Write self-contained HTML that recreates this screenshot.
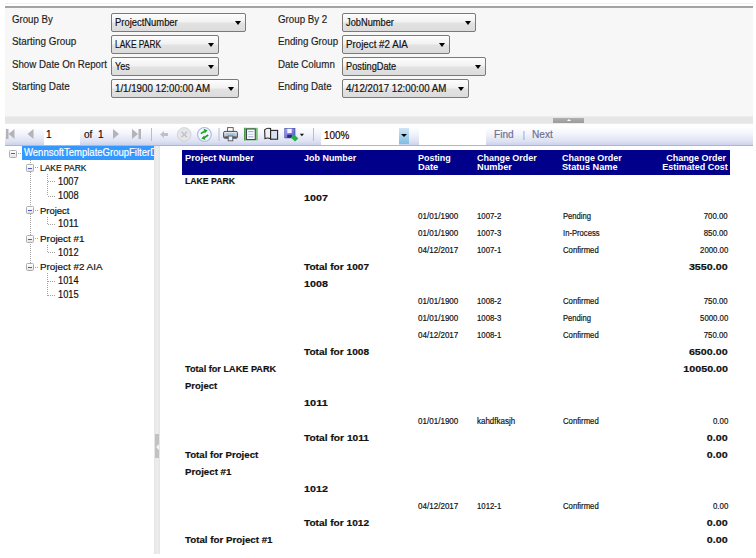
<!DOCTYPE html>
<html><head><meta charset="utf-8"><style>
html,body{margin:0;padding:0;width:756px;height:558px;overflow:hidden;background:#fff;}
body{position:relative;font-family:"Liberation Sans",sans-serif;}
.t{position:absolute;white-space:pre;font-family:"Liberation Sans",sans-serif;-webkit-text-stroke:0.18px currentColor;}
.sel{position:absolute;border:1px solid #7a7a7a;border-radius:2px;background:linear-gradient(#fdfdfd,#f2f2f2 45%,#e2e2e2 55%,#dcdcdc);}
.arr{position:absolute;width:0;height:0;border-left:3.8px solid transparent;border-right:3.8px solid transparent;border-top:4px solid #000;}
.tb{position:absolute;width:6px;height:6px;border:1px solid #adadad;border-radius:1.5px;background:linear-gradient(#fff,#e4e4e4);}
.tb::after{content:"";position:absolute;left:1px;top:2.5px;width:4px;height:1px;background:#4a5cc0;}
</style></head><body>
<div style="position:absolute;left:5px;top:6px;width:748px;height:2px;background:#a3a3a3"></div>
<div style="position:absolute;left:5px;top:8px;width:748px;height:109px;background:#f7f7f7"></div>
<div class="t" style="left:12px;transform-origin:0 50%;top:14.09px;font-size:11px;line-height:11px;font-weight:400;color:#1e1e1e;transform:scaleX(0.8763);">Group By</div>
<div class="t" style="left:12px;transform-origin:0 50%;top:36.39px;font-size:11px;line-height:11px;font-weight:400;color:#1e1e1e;transform:scaleX(0.8968);">Starting Group</div>
<div class="t" style="left:12px;transform-origin:0 50%;top:58.59px;font-size:11px;line-height:11px;font-weight:400;color:#1e1e1e;transform:scaleX(0.8823);">Show Date On Report</div>
<div class="t" style="left:12px;transform-origin:0 50%;top:80.79px;font-size:11px;line-height:11px;font-weight:400;color:#1e1e1e;transform:scaleX(0.8995);">Starting Date</div>
<div class="t" style="left:278px;transform-origin:0 50%;top:14.09px;font-size:11px;line-height:11px;font-weight:400;color:#1e1e1e;transform:scaleX(0.8848);">Group By 2</div>
<div class="t" style="left:278px;transform-origin:0 50%;top:36.39px;font-size:11px;line-height:11px;font-weight:400;color:#1e1e1e;transform:scaleX(0.8845);">Ending Group</div>
<div class="t" style="left:278px;transform-origin:0 50%;top:58.59px;font-size:11px;line-height:11px;font-weight:400;color:#1e1e1e;transform:scaleX(0.8847);">Date Column</div>
<div class="t" style="left:278px;transform-origin:0 50%;top:80.79px;font-size:11px;line-height:11px;font-weight:400;color:#1e1e1e;transform:scaleX(0.8859);">Ending Date</div>
<div class="sel" style="left:111px;top:13px;width:133px;height:17px;"></div>
<div class="t" style="left:114.6px;transform-origin:0 50%;top:18.47px;font-size:10.2px;line-height:10.2px;font-weight:400;color:#111;transform:scaleX(0.9234);">ProjectNumber</div>
<div class="arr" style="left:235.2px;top:20.5px;"></div>
<div class="sel" style="left:111px;top:35px;width:106px;height:17px;"></div>
<div class="t" style="left:114.6px;transform-origin:0 50%;top:40.47px;font-size:10.2px;line-height:10.2px;font-weight:400;color:#111;transform:scaleX(0.8246);">LAKE PARK</div>
<div class="arr" style="left:208.2px;top:42.5px;"></div>
<div class="sel" style="left:111px;top:57px;width:106px;height:17px;"></div>
<div class="t" style="left:114.6px;transform-origin:0 50%;top:62.47px;font-size:10.2px;line-height:10.2px;font-weight:400;color:#111;transform:scaleX(0.8901);">Yes</div>
<div class="arr" style="left:208.2px;top:64.5px;"></div>
<div class="sel" style="left:111px;top:79px;width:126px;height:17px;"></div>
<div class="t" style="left:114.6px;transform-origin:0 50%;top:84.47px;font-size:10.2px;line-height:10.2px;font-weight:400;color:#111;transform:scaleX(0.9537);">1/1/1900 12:00:00 AM</div>
<div class="arr" style="left:228.2px;top:86.5px;"></div>
<div class="sel" style="left:342px;top:13px;width:132px;height:17px;"></div>
<div class="t" style="left:345.6px;transform-origin:0 50%;top:18.47px;font-size:10.2px;line-height:10.2px;font-weight:400;color:#111;transform:scaleX(0.9094);">JobNumber</div>
<div class="arr" style="left:465.2px;top:20.5px;"></div>
<div class="sel" style="left:342px;top:35px;width:106px;height:17px;"></div>
<div class="t" style="left:345.6px;transform-origin:0 50%;top:40.47px;font-size:10.2px;line-height:10.2px;font-weight:400;color:#111;transform:scaleX(0.9585);">Project #2 AIA</div>
<div class="arr" style="left:439.2px;top:42.5px;"></div>
<div class="sel" style="left:342px;top:57px;width:142px;height:17px;"></div>
<div class="t" style="left:345.6px;transform-origin:0 50%;top:62.47px;font-size:10.2px;line-height:10.2px;font-weight:400;color:#111;transform:scaleX(0.9053);">PostingDate</div>
<div class="arr" style="left:475.2px;top:64.5px;"></div>
<div class="sel" style="left:342px;top:79px;width:125px;height:17px;"></div>
<div class="t" style="left:345.6px;transform-origin:0 50%;top:84.47px;font-size:10.2px;line-height:10.2px;font-weight:400;color:#111;transform:scaleX(0.9517);">4/12/2017 12:00:00 AM</div>
<div class="arr" style="left:458.2px;top:86.5px;"></div>
<div style="position:absolute;left:5px;top:3px;width:748px;height:1px;background:#f1f1f1"></div>
<div style="position:absolute;left:5px;top:116px;width:748px;height:8px;background:linear-gradient(#eeeeee 0 1px,#e6e6e6 1px 7px,#ebebeb 7px)"></div>
<div style="position:absolute;left:553px;top:117.5px;width:31px;height:5.2px;background:linear-gradient(#b0b0b0,#9a9a9a)"></div>
<div style="position:absolute;left:566.5px;top:118.6px;width:0;height:0;border-left:2.5px solid transparent;border-right:2.5px solid transparent;border-bottom:2.5px solid #fff"></div>
<div style="position:absolute;left:5px;top:124px;width:748px;height:3px;background:#fff"></div>
<div style="position:absolute;left:5px;top:127px;width:748px;height:18px;background:linear-gradient(#ffffff,#f3f5fd 35%,#dde1f1 80%,#cdd2ee)"></div>
<div style="position:absolute;left:5px;top:145px;width:748px;height:1px;background:#b0b7c2"></div>
<div style="position:absolute;left:44px;top:127px;width:36px;height:18px;background:#fff"></div>
<div style="position:absolute;left:321px;top:127px;width:78px;height:18px;background:#fff"></div>
<div style="position:absolute;left:399px;top:128px;width:10px;height:16px;background:linear-gradient(#cfe6f5,#7fbde4)"></div>
<div style="position:absolute;left:401px;top:134px;width:0;height:0;border-left:3px solid transparent;border-right:3px solid transparent;border-top:3px solid #000"></div>
<div style="position:absolute;left:419px;top:127px;width:67px;height:18px;background:#fff"></div>
<div class="t" style="left:46px;transform-origin:0 50%;top:128.83px;font-size:10.6px;line-height:10.6px;font-weight:400;color:#200;transform:scaleX(0.9500);">1</div>
<div class="t" style="left:83.5px;transform-origin:0 50%;top:128.83px;font-size:10.6px;line-height:10.6px;font-weight:400;color:#111;transform:scaleX(0.9500);">of</div>
<div class="t" style="left:98px;transform-origin:0 50%;top:128.83px;font-size:10.6px;line-height:10.6px;font-weight:400;color:#200;transform:scaleX(0.9500);">1</div>
<div class="t" style="left:323.8px;transform-origin:0 50%;top:130.14px;font-size:10.7px;line-height:10.7px;font-weight:400;color:#200;transform:scaleX(0.9300);">100%</div>
<div class="t" style="left:494.3px;transform-origin:0 50%;top:129.68px;font-size:10.3px;line-height:10.3px;font-weight:400;color:#6f6f8f;transform:scaleX(0.9800);">Find</div>
<div class="t" style="left:522.8px;transform-origin:0 50%;top:131.09px;font-size:8.4px;line-height:8.4px;font-weight:400;color:#a6a6bc;">|</div>
<div class="t" style="left:532.4px;transform-origin:0 50%;top:129.68px;font-size:10.3px;line-height:10.3px;font-weight:400;color:#6f6f8f;transform:scaleX(0.9800);">Next</div>

<svg style="position:absolute;left:0;top:120px" width="320" height="26" viewBox="0 120 320 26">
 <!-- first -->
 <rect x="6" y="129" width="2.5" height="10" fill="#b4b4b8"/>
 <path d="M14.5 129 L8.5 134 L14.5 139 Z" fill="#b4b4b8"/>
 <!-- prev -->
 <path d="M33.5 129 L27.5 134 L33.5 139 Z" fill="#b4b4b8"/>
 <!-- next -->
 <path d="M113 129 L119 134 L113 139 Z" fill="#b4b4b8"/>
 <!-- last -->
 <path d="M132 129 L138 134 L132 139 Z" fill="#b4b4b8"/>
 <rect x="138.5" y="129" width="2.5" height="10" fill="#b4b4b8"/>
 <!-- separators -->
 <rect x="151" y="128" width="1" height="13" fill="#b8bccc"/>
 <rect x="218.5" y="128" width="1" height="13" fill="#b8bccc"/>
 <rect x="313" y="128" width="1" height="13" fill="#b8bccc"/>
 <!-- back -->
 <path d="M160 134.5 L164 131 L164 133 L168 133 L168 136 L164 136 L164 138 Z" fill="#c0c0c4"/>
 <!-- stop -->
 <circle cx="184.2" cy="134.5" r="6.8" fill="#e6e6ea" stroke="#d0d0d6" stroke-width="1"/>
 <path d="M181.5 131.8 L187 137.2 M187 131.8 L181.5 137.2" stroke="#c2c2c8" stroke-width="1.6"/>
 <!-- refresh -->
 <defs>
  <linearGradient id="gBody" x1="0" y1="0" x2="0" y2="1"><stop offset="0" stop-color="#eceef2"/><stop offset="1" stop-color="#a4a8b0"/></linearGradient>
  <linearGradient id="gSave" x1="0" y1="0" x2="1" y2="1"><stop offset="0" stop-color="#a4aaf8"/><stop offset="1" stop-color="#5058d0"/></linearGradient>
 </defs>
 <circle cx="204.4" cy="134.4" r="6.9" fill="#f2f7ff" stroke="#a6bbe0" stroke-width="1.1"/>
 <path d="M200.8 133.6 L204.6 131.2" stroke="#22a622" stroke-width="1.7" fill="none"/>
 <path d="M203.6 128.8 L207.6 130.2 L204.8 133.4 Z" fill="#22a622"/>
 <path d="M208.2 135.0 L204.4 137.6" stroke="#1e9a1e" stroke-width="1.7" fill="none"/>
 <path d="M205.4 140.0 L201.4 138.4 L204.2 135.4 Z" fill="#1e9a1e"/>
 <!-- printer -->
 <rect x="227.6" y="127.6" width="5.6" height="4.4" fill="#fafafa" stroke="#555" stroke-width="0.9"/>
 <rect x="223.6" y="131.4" width="13.8" height="6.8" rx="1.3" fill="url(#gBody)" stroke="#3c3c3c" stroke-width="0.9"/>
 <rect x="224.4" y="136.4" width="12.2" height="1.6" fill="#555"/>
 <rect x="226.2" y="133.4" width="8.6" height="1.6" fill="#9cc0e4"/>
 <rect x="228.2" y="136.0" width="4.6" height="4.8" fill="#e4f2fc" stroke="#555" stroke-width="0.9"/>
 <!-- page layout -->
 <rect x="244" y="127.8" width="13.8" height="12.6" fill="#7cc47c"/>
 <rect x="244" y="127.8" width="1.4" height="12.6" fill="#4a9a4a"/>
 <rect x="246.6" y="129.0" width="8.6" height="10.6" fill="#fafbfd" stroke="#2a3040" stroke-width="0.9"/>
 <rect x="248.2" y="131.2" width="5.2" height="0.9" fill="#8c9ccc"/>
 <rect x="248.2" y="133.8" width="5.2" height="0.9" fill="#b8c4e0"/>
 <rect x="248.2" y="136.4" width="5.2" height="0.9" fill="#8c9ccc"/>
 <!-- page setup (book) -->
 <path d="M264.6 129.8 Q267.2 127.4 270.6 128.6 L270.8 138.8 Q267.6 137.2 265 138.6 Z" fill="#eef1f6" stroke="#262626" stroke-width="1.1"/>
 <rect x="270.6" y="130.4" width="7" height="8.8" fill="#d6e2f4" stroke="#262626" stroke-width="1.1"/>
 <!-- save -->
 <rect x="284.8" y="128.3" width="10.2" height="9.6" fill="url(#gSave)" stroke="#3a3a98" stroke-width="0.6"/>
 <rect x="287.3" y="128.8" width="4.4" height="4.2" fill="#f2f4fc"/>
 <rect x="287.2" y="134.8" width="4.6" height="3" fill="#26287a"/>
 <path d="M290.8 137.6 L294.2 134.6 L298.4 138.4 L295 141.6 Z" fill="#24b048"/>
 <path d="M299.8 133.8 L304 133.8 L301.9 136.2 Z" fill="#111"/>
</svg>
<div style="position:absolute;left:5px;top:146px;width:149px;height:412px;background:#fff"></div>
<div style="position:absolute;left:154px;top:146px;width:6px;height:408px;background:linear-gradient(90deg,#e4e4e4,#eeeeee 50%,#e4e4e4)"></div>
<div style="position:absolute;left:154.7px;top:434px;width:4.8px;height:23.5px;background:#c2c2c2"></div>
<div style="position:absolute;left:155.5px;top:444px;width:0;height:0;border-top:3px solid transparent;border-bottom:3px solid transparent;border-right:3px solid #f4f4f4"></div>
<div style="position:absolute;left:22px;top:146px;width:132px;height:14px;background:#3399ff"></div>
<div style="position:absolute;left:22px;top:146px;width:132px;height:14px;overflow:hidden"><div class="t" style="left:1.7px;top:2.47px;font-size:10.2px;line-height:10.2px;color:#fff;transform-origin:0 50%;transform:scaleX(0.9336)">WennsoftTemplateGroupFilterDocument</div></div>
<div class="tb" style="left:9px;top:149.5px"></div>
<div style="position:absolute;left:18px;top:153px;width:4px;height:1px;background:repeating-linear-gradient(90deg,#a4a4a4 0 1px,transparent 1px 2px)"></div>
<div style="position:absolute;left:30px;top:160px;width:1px;height:107px;background:repeating-linear-gradient(#a4a4a4 0 1px,transparent 1px 2px)"></div>
<div class="tb" style="left:26px;top:164px"></div>
<div style="position:absolute;left:35px;top:167px;width:4px;height:1px;background:repeating-linear-gradient(90deg,#a4a4a4 0 1px,transparent 1px 2px)"></div>
<div class="t" style="left:40px;transform-origin:0 50%;top:162.94px;font-size:9.4px;line-height:9.4px;font-weight:400;color:#111;transform:scaleX(0.9043);">LAKE PARK</div>
<div class="tb" style="left:26px;top:206px"></div>
<div style="position:absolute;left:35px;top:210px;width:4px;height:1px;background:repeating-linear-gradient(90deg,#a4a4a4 0 1px,transparent 1px 2px)"></div>
<div class="t" style="left:40px;transform-origin:0 50%;top:205.54px;font-size:9.4px;line-height:9.4px;font-weight:400;color:#111;transform:scaleX(1.0097);">Project</div>
<div class="tb" style="left:26px;top:235px"></div>
<div style="position:absolute;left:35px;top:238px;width:4px;height:1px;background:repeating-linear-gradient(90deg,#a4a4a4 0 1px,transparent 1px 2px)"></div>
<div class="t" style="left:40px;transform-origin:0 50%;top:233.94px;font-size:9.4px;line-height:9.4px;font-weight:400;color:#111;transform:scaleX(1.0559);">Project #1</div>
<div class="tb" style="left:26px;top:263px"></div>
<div style="position:absolute;left:35px;top:267px;width:4px;height:1px;background:repeating-linear-gradient(90deg,#a4a4a4 0 1px,transparent 1px 2px)"></div>
<div class="t" style="left:40px;transform-origin:0 50%;top:262.34px;font-size:9.4px;line-height:9.4px;font-weight:400;color:#111;transform:scaleX(1.0512);">Project #2 AIA</div>
<div style="position:absolute;left:48px;top:181px;width:8px;height:1px;background:repeating-linear-gradient(90deg,#a4a4a4 0 1px,transparent 1px 2px)"></div>
<div class="t" style="left:58px;transform-origin:0 50%;top:176.74px;font-size:10px;line-height:10px;font-weight:400;color:#111;transform:scaleX(0.9247);">1007</div>
<div style="position:absolute;left:48px;top:196px;width:8px;height:1px;background:repeating-linear-gradient(90deg,#a4a4a4 0 1px,transparent 1px 2px)"></div>
<div class="t" style="left:58px;transform-origin:0 50%;top:190.94px;font-size:10px;line-height:10px;font-weight:400;color:#111;transform:scaleX(0.9247);">1008</div>
<div style="position:absolute;left:48px;top:224px;width:8px;height:1px;background:repeating-linear-gradient(90deg,#a4a4a4 0 1px,transparent 1px 2px)"></div>
<div class="t" style="left:58px;transform-origin:0 50%;top:219.34px;font-size:10px;line-height:10px;font-weight:400;color:#111;transform:scaleX(0.9567);">1011</div>
<div style="position:absolute;left:48px;top:252px;width:8px;height:1px;background:repeating-linear-gradient(90deg,#a4a4a4 0 1px,transparent 1px 2px)"></div>
<div class="t" style="left:58px;transform-origin:0 50%;top:247.74px;font-size:10px;line-height:10px;font-weight:400;color:#111;transform:scaleX(0.9247);">1012</div>
<div style="position:absolute;left:48px;top:281px;width:8px;height:1px;background:repeating-linear-gradient(90deg,#a4a4a4 0 1px,transparent 1px 2px)"></div>
<div class="t" style="left:58px;transform-origin:0 50%;top:276.14px;font-size:10px;line-height:10px;font-weight:400;color:#111;transform:scaleX(0.9247);">1014</div>
<div style="position:absolute;left:48px;top:295px;width:8px;height:1px;background:repeating-linear-gradient(90deg,#a4a4a4 0 1px,transparent 1px 2px)"></div>
<div class="t" style="left:58px;transform-origin:0 50%;top:290.34px;font-size:10px;line-height:10px;font-weight:400;color:#111;transform:scaleX(0.9247);">1015</div>
<div style="position:absolute;left:47px;top:174px;width:1px;height:22px;background:repeating-linear-gradient(#a4a4a4 0 1px,transparent 1px 2px)"></div>
<div style="position:absolute;left:47px;top:217px;width:1px;height:8px;background:repeating-linear-gradient(#a4a4a4 0 1px,transparent 1px 2px)"></div>
<div style="position:absolute;left:47px;top:245px;width:1px;height:8px;background:repeating-linear-gradient(#a4a4a4 0 1px,transparent 1px 2px)"></div>
<div style="position:absolute;left:47px;top:273px;width:1px;height:23px;background:repeating-linear-gradient(#a4a4a4 0 1px,transparent 1px 2px)"></div>
<div style="position:absolute;left:160px;top:146px;width:596px;height:412px;background:#fff"></div>
<div style="position:absolute;left:182px;top:150px;width:548px;height:24.5px;background:#00008b"></div>
<div class="t" style="left:185px;transform-origin:0 50%;top:152.87px;font-size:9.6px;line-height:9.6px;font-weight:700;color:#fff;transform:scaleX(0.9622);-webkit-text-stroke:0;">Project Number</div>
<div class="t" style="left:304px;transform-origin:0 50%;top:152.87px;font-size:9.6px;line-height:9.6px;font-weight:700;color:#fff;transform:scaleX(0.9343);-webkit-text-stroke:0;">Job Number</div>
<div class="t" style="left:418px;transform-origin:0 50%;top:152.87px;font-size:9.6px;line-height:9.6px;font-weight:700;color:#fff;transform:scaleX(0.9317);-webkit-text-stroke:0;">Posting</div>
<div class="t" style="left:418px;transform-origin:0 50%;top:162.47px;font-size:9.6px;line-height:9.6px;font-weight:700;color:#fff;transform:scaleX(0.9764);-webkit-text-stroke:0;">Date</div>
<div class="t" style="left:477px;transform-origin:0 50%;top:152.87px;font-size:9.6px;line-height:9.6px;font-weight:700;color:#fff;transform:scaleX(0.9345);-webkit-text-stroke:0;">Change Order</div>
<div class="t" style="left:477px;transform-origin:0 50%;top:162.47px;font-size:9.6px;line-height:9.6px;font-weight:700;color:#fff;transform:scaleX(0.9645);-webkit-text-stroke:0;">Number</div>
<div class="t" style="left:562px;transform-origin:0 50%;top:152.87px;font-size:9.6px;line-height:9.6px;font-weight:700;color:#fff;transform:scaleX(0.9345);-webkit-text-stroke:0;">Change Order</div>
<div class="t" style="left:562px;transform-origin:0 50%;top:162.47px;font-size:9.6px;line-height:9.6px;font-weight:700;color:#fff;transform:scaleX(0.9565);-webkit-text-stroke:0;">Status Name</div>
<div class="t" style="right:30px;transform-origin:100% 50%;top:152.87px;font-size:9.6px;line-height:9.6px;font-weight:700;color:#fff;transform:scaleX(0.9345);-webkit-text-stroke:0;">Change Order</div>
<div class="t" style="right:28px;transform-origin:100% 50%;top:162.47px;font-size:9.6px;line-height:9.6px;font-weight:700;color:#fff;transform:scaleX(0.9381);-webkit-text-stroke:0;">Estimated Cost</div>
<div class="t" style="left:185px;transform-origin:0 50%;top:176.37px;font-size:9.6px;line-height:9.6px;font-weight:700;color:#111;transform:scaleX(0.9047);">LAKE PARK</div>
<div class="t" style="left:304px;transform-origin:0 50%;top:193.45px;font-size:9.6px;line-height:9.6px;font-weight:700;color:#111;transform:scaleX(1.1181);">1007</div>
<div class="t" style="left:418px;transform-origin:0 50%;top:211.65px;font-size:8.4px;line-height:8.4px;font-weight:400;color:#111;transform:scaleX(0.9623);">01/01/1900</div>
<div class="t" style="left:477px;transform-origin:0 50%;top:211.65px;font-size:8.4px;line-height:8.4px;font-weight:400;color:#111;transform:scaleX(0.9310);">1007-2</div>
<div class="t" style="left:562.5px;transform-origin:0 50%;top:211.65px;font-size:8.4px;line-height:8.4px;font-weight:400;color:#111;transform:scaleX(0.9126);">Pending</div>
<div class="t" style="right:28px;transform-origin:100% 50%;top:211.65px;font-size:8.4px;line-height:8.4px;font-weight:400;color:#111;transform:scaleX(0.9342);">700.00</div>
<div class="t" style="left:418px;transform-origin:0 50%;top:228.73px;font-size:8.4px;line-height:8.4px;font-weight:400;color:#111;transform:scaleX(0.9623);">01/01/1900</div>
<div class="t" style="left:477px;transform-origin:0 50%;top:228.73px;font-size:8.4px;line-height:8.4px;font-weight:400;color:#111;transform:scaleX(0.9310);">1007-3</div>
<div class="t" style="left:562.5px;transform-origin:0 50%;top:228.73px;font-size:8.4px;line-height:8.4px;font-weight:400;color:#111;transform:scaleX(0.9133);">In-Process</div>
<div class="t" style="right:28px;transform-origin:100% 50%;top:228.73px;font-size:8.4px;line-height:8.4px;font-weight:400;color:#111;transform:scaleX(0.9342);">850.00</div>
<div class="t" style="left:418px;transform-origin:0 50%;top:245.81px;font-size:8.4px;line-height:8.4px;font-weight:400;color:#111;transform:scaleX(0.9623);">04/12/2017</div>
<div class="t" style="left:477px;transform-origin:0 50%;top:245.81px;font-size:8.4px;line-height:8.4px;font-weight:400;color:#111;transform:scaleX(0.9310);">1007-1</div>
<div class="t" style="left:562.5px;transform-origin:0 50%;top:245.81px;font-size:8.4px;line-height:8.4px;font-weight:400;color:#111;transform:scaleX(0.9243);">Confirmed</div>
<div class="t" style="right:28px;transform-origin:100% 50%;top:245.81px;font-size:8.4px;line-height:8.4px;font-weight:400;color:#111;transform:scaleX(0.9324);">2000.00</div>
<div class="t" style="left:304px;transform-origin:0 50%;top:261.77px;font-size:9.6px;line-height:9.6px;font-weight:700;color:#111;transform:scaleX(1.0543);">Total for 1007</div>
<div class="t" style="right:28px;transform-origin:100% 50%;top:261.77px;font-size:9.6px;line-height:9.6px;font-weight:700;color:#111;transform:scaleX(1.1186);">3550.00</div>
<div class="t" style="left:304px;transform-origin:0 50%;top:278.85px;font-size:9.6px;line-height:9.6px;font-weight:700;color:#111;transform:scaleX(1.1181);">1008</div>
<div class="t" style="left:418px;transform-origin:0 50%;top:297.05px;font-size:8.4px;line-height:8.4px;font-weight:400;color:#111;transform:scaleX(0.9623);">01/01/1900</div>
<div class="t" style="left:477px;transform-origin:0 50%;top:297.05px;font-size:8.4px;line-height:8.4px;font-weight:400;color:#111;transform:scaleX(0.9310);">1008-2</div>
<div class="t" style="left:562.5px;transform-origin:0 50%;top:297.05px;font-size:8.4px;line-height:8.4px;font-weight:400;color:#111;transform:scaleX(0.9243);">Confirmed</div>
<div class="t" style="right:28px;transform-origin:100% 50%;top:297.05px;font-size:8.4px;line-height:8.4px;font-weight:400;color:#111;transform:scaleX(0.9342);">750.00</div>
<div class="t" style="left:418px;transform-origin:0 50%;top:314.13px;font-size:8.4px;line-height:8.4px;font-weight:400;color:#111;transform:scaleX(0.9623);">01/01/1900</div>
<div class="t" style="left:477px;transform-origin:0 50%;top:314.13px;font-size:8.4px;line-height:8.4px;font-weight:400;color:#111;transform:scaleX(0.9310);">1008-3</div>
<div class="t" style="left:562.5px;transform-origin:0 50%;top:314.13px;font-size:8.4px;line-height:8.4px;font-weight:400;color:#111;transform:scaleX(0.9126);">Pending</div>
<div class="t" style="right:28px;transform-origin:100% 50%;top:314.13px;font-size:8.4px;line-height:8.4px;font-weight:400;color:#111;transform:scaleX(0.9324);">5000.00</div>
<div class="t" style="left:418px;transform-origin:0 50%;top:331.21px;font-size:8.4px;line-height:8.4px;font-weight:400;color:#111;transform:scaleX(0.9623);">04/12/2017</div>
<div class="t" style="left:477px;transform-origin:0 50%;top:331.21px;font-size:8.4px;line-height:8.4px;font-weight:400;color:#111;transform:scaleX(0.9310);">1008-1</div>
<div class="t" style="left:562.5px;transform-origin:0 50%;top:331.21px;font-size:8.4px;line-height:8.4px;font-weight:400;color:#111;transform:scaleX(0.9243);">Confirmed</div>
<div class="t" style="right:28px;transform-origin:100% 50%;top:331.21px;font-size:8.4px;line-height:8.4px;font-weight:400;color:#111;transform:scaleX(0.9342);">750.00</div>
<div class="t" style="left:304px;transform-origin:0 50%;top:347.17px;font-size:9.6px;line-height:9.6px;font-weight:700;color:#111;transform:scaleX(1.0543);">Total for 1008</div>
<div class="t" style="right:28px;transform-origin:100% 50%;top:347.17px;font-size:9.6px;line-height:9.6px;font-weight:700;color:#111;transform:scaleX(1.1186);">6500.00</div>
<div class="t" style="left:185px;transform-origin:0 50%;top:364.25px;font-size:9.6px;line-height:9.6px;font-weight:700;color:#111;transform:scaleX(0.9536);">Total for LAKE PARK</div>
<div class="t" style="right:28px;transform-origin:100% 50%;top:364.25px;font-size:9.6px;line-height:9.6px;font-weight:700;color:#111;transform:scaleX(1.1185);">10050.00</div>
<div class="t" style="left:185px;transform-origin:0 50%;top:381.33px;font-size:9.6px;line-height:9.6px;font-weight:700;color:#111;transform:scaleX(0.9853);">Project</div>
<div class="t" style="left:304px;transform-origin:0 50%;top:398.41px;font-size:9.6px;line-height:9.6px;font-weight:700;color:#111;transform:scaleX(1.1465);">1011</div>
<div class="t" style="left:418px;transform-origin:0 50%;top:416.61px;font-size:8.4px;line-height:8.4px;font-weight:400;color:#111;transform:scaleX(0.9623);">01/01/1900</div>
<div class="t" style="left:477px;transform-origin:0 50%;top:416.61px;font-size:8.4px;line-height:8.4px;font-weight:400;color:#111;transform:scaleX(0.9522);">kahdfkasjh</div>
<div class="t" style="left:562.5px;transform-origin:0 50%;top:416.61px;font-size:8.4px;line-height:8.4px;font-weight:400;color:#111;transform:scaleX(0.9243);">Confirmed</div>
<div class="t" style="right:28px;transform-origin:100% 50%;top:416.61px;font-size:8.4px;line-height:8.4px;font-weight:400;color:#111;transform:scaleX(0.9410);">0.00</div>
<div class="t" style="left:304px;transform-origin:0 50%;top:432.57px;font-size:9.6px;line-height:9.6px;font-weight:700;color:#111;transform:scaleX(1.0634);">Total for 1011</div>
<div class="t" style="right:28px;transform-origin:100% 50%;top:432.57px;font-size:9.6px;line-height:9.6px;font-weight:700;color:#111;transform:scaleX(1.1190);">0.00</div>
<div class="t" style="left:185px;transform-origin:0 50%;top:449.65px;font-size:9.6px;line-height:9.6px;font-weight:700;color:#111;transform:scaleX(1.0048);">Total for Project</div>
<div class="t" style="right:28px;transform-origin:100% 50%;top:449.65px;font-size:9.6px;line-height:9.6px;font-weight:700;color:#111;transform:scaleX(1.1190);">0.00</div>
<div class="t" style="left:185px;transform-origin:0 50%;top:466.73px;font-size:9.6px;line-height:9.6px;font-weight:700;color:#111;transform:scaleX(1.0108);">Project #1</div>
<div class="t" style="left:304px;transform-origin:0 50%;top:483.81px;font-size:9.6px;line-height:9.6px;font-weight:700;color:#111;transform:scaleX(1.1181);">1012</div>
<div class="t" style="left:418px;transform-origin:0 50%;top:502.01px;font-size:8.4px;line-height:8.4px;font-weight:400;color:#111;transform:scaleX(0.9623);">04/12/2017</div>
<div class="t" style="left:477px;transform-origin:0 50%;top:502.01px;font-size:8.4px;line-height:8.4px;font-weight:400;color:#111;transform:scaleX(0.9310);">1012-1</div>
<div class="t" style="left:562.5px;transform-origin:0 50%;top:502.01px;font-size:8.4px;line-height:8.4px;font-weight:400;color:#111;transform:scaleX(0.9243);">Confirmed</div>
<div class="t" style="right:28px;transform-origin:100% 50%;top:502.01px;font-size:8.4px;line-height:8.4px;font-weight:400;color:#111;transform:scaleX(0.9410);">0.00</div>
<div class="t" style="left:304px;transform-origin:0 50%;top:517.97px;font-size:9.6px;line-height:9.6px;font-weight:700;color:#111;transform:scaleX(1.0543);">Total for 1012</div>
<div class="t" style="right:28px;transform-origin:100% 50%;top:517.97px;font-size:9.6px;line-height:9.6px;font-weight:700;color:#111;transform:scaleX(1.1190);">0.00</div>
<div class="t" style="left:185px;transform-origin:0 50%;top:535.05px;font-size:9.6px;line-height:9.6px;font-weight:700;color:#111;transform:scaleX(1.0154);">Total for Project #1</div>
<div class="t" style="right:28px;transform-origin:100% 50%;top:535.05px;font-size:9.6px;line-height:9.6px;font-weight:700;color:#111;transform:scaleX(1.1190);">0.00</div>
</body></html>
